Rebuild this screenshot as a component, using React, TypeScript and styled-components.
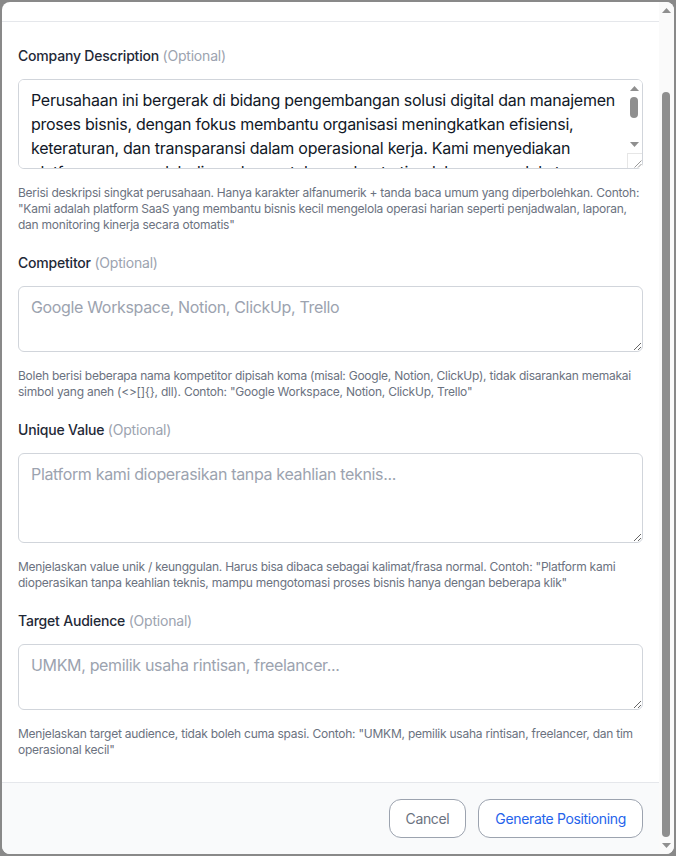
import React, { useLayoutEffect, useRef, useState } from 'react';
import styled, { createGlobalStyle } from 'styled-components';

const GlobalStyle = createGlobalStyle`
  html, body {
    margin: 0;
    height: 100%;
  }
  body {
    font-family: 'Inter', 'Noto Sans', sans-serif;
    background: #898989;
  }
  #root {
    height: 100%;
  }
  * {
    box-sizing: border-box;
  }
`;

const Overlay = styled.div`
  height: 100vh;
  padding: 2px;
  display: flex;
`;

const Modal = styled.div`
  flex: 1;
  display: flex;
  background: #ffffff;
  border-radius: 8px;
  overflow: hidden;
`;

const Scroller = styled.div`
  flex: 1;
  overflow-y: auto;
  scrollbar-width: none;
  &::-webkit-scrollbar {
    display: none;
  }
`;

const Header = styled.div`
  padding: 24px 16px 27px;
  border-bottom: 1px solid #e5e7eb;
`;

const Title = styled.h2`
  margin: 0;
  font-size: 18px;
  line-height: 28px;
  font-weight: 600;
  color: #111827;
`;

const Subtitle = styled.p`
  margin: 4px 0 0;
  font-size: 14px;
  line-height: 20px;
  color: #6b7280;
`;

const Body = styled.div`
  padding: 24px 16px;
`;

const Field = styled.div`
  & + & {
    margin-top: 20px;
  }
`;

const Label = styled.label`
  display: block;
  margin-bottom: 13px;
  font-size: 14px;
  line-height: 20px;
  font-weight: 500;
  letter-spacing: -0.2px;
  color: #1f2937;
`;

const Optional = styled.span`
  font-weight: 400;
  color: #9ca3af;
`;

const InputBox = styled.div`
  position: relative;
`;

const TextArea = styled.textarea<{ $lines: number }>`
  display: block;
  width: 100%;
  height: ${(p) => p.$lines * 24 + 18}px;
  margin: 0;
  padding: 8px ${(p) => (p.$lines > 2 ? 20 : 12)}px 8px 12px;
  border: 1px solid #d1d5db;
  border-radius: 6px;
  background: #ffffff;
  font-family: 'Inter', 'Noto Sans', sans-serif;
  font-size: 16px;
  line-height: 24px;
  letter-spacing: -0.26px;
  color: #111827;
  resize: vertical;
  outline: none;
  scrollbar-width: none;
  &::-webkit-scrollbar {
    display: none;
  }
  &::placeholder {
    color: #9ca3af;
    letter-spacing: -0.34px;
  }
`;

const Help = styled.p`
  margin: 16px 0 0;
  font-size: 12px;
  line-height: 16px;
  letter-spacing: -0.24px;
  color: #6b7280;
`;

const Footer = styled.div`
  display: flex;
  justify-content: flex-end;
  gap: 12px;
  padding: 16px;
  background: #f9fafb;
  border-top: 1px solid #e5e7eb;
`;

const Button = styled.button<{ $primary?: boolean }>`
  height: 39px;
  padding: 0 16px;
  border: 1px solid #9ca3af;
  border-radius: 12px;
  background: #ffffff;
  font-family: 'Inter', 'Noto Sans', sans-serif;
  font-size: 14px;
  letter-spacing: -0.35px;
  color: ${(p) => (p.$primary ? '#2563eb' : '#6b7280')};
  cursor: pointer;
`;

/* drawn scrollbars */

const Track = styled.div<{ $bg: string }>`
  width: 15px;
  display: flex;
  flex-direction: column;
  background: ${(p) => p.$bg};
`;

const FieldTrack = styled(Track)`
  position: absolute;
  top: 1px;
  right: 1px;
  bottom: 1px;
  border-top-right-radius: 5px;
  border-bottom-right-radius: 5px;
`;

const Arrow = styled.div`
  height: 17px;
  flex: none;
  display: flex;
  align-items: center;
  justify-content: center;
  color: #8f8f8f;
`;

const ThumbArea = styled.div`
  flex: 1;
  position: relative;
`;

const Thumb = styled.div`
  position: absolute;
  left: 3px;
  width: 8px;
  border-radius: 4px;
  background: #8f8f8f;
`;

const Corner = styled.div`
  height: 15px;
  flex: none;
  background: #ffffff;
  border-top: 1px solid #e6e6e6;
  border-left: 1px solid #e6e6e6;
  display: flex;
  align-items: flex-end;
  justify-content: flex-end;
`;

const Triangle = ({ down }: { down?: boolean }) => (
  <svg width="9" height="5" viewBox="0 0 9 5">
    <polygon points={down ? '0,0 9,0 4.5,5' : '0,5 4.5,0 9,5'} fill="currentColor" />
  </svg>
);

const Grip = () => (
  <svg width="9" height="9" viewBox="0 0 9 9">
    <line x1="8.5" y1="1.5" x2="1.5" y2="8.5" stroke="#9a9a9a" strokeWidth="1" />
    <line x1="8.5" y1="5" x2="5" y2="8.5" stroke="#9a9a9a" strokeWidth="1" />
  </svg>
);

type Bar = { top: number; height: number };

function measure(el: HTMLElement, reserved: number): Bar {
  const track = el.clientHeight - reserved;
  const ratio = el.clientHeight / el.scrollHeight;
  return {
    top: (el.scrollTop / el.scrollHeight) * track,
    height: Math.max(ratio * track, 18),
  };
}

const description =
  'Perusahaan ini bergerak di bidang pengembangan solusi digital dan manajemen proses bisnis, dengan fokus membantu organisasi meningkatkan efisiensi, keteraturan, dan transparansi dalam operasional kerja. Kami menyediakan platform yang mudah digunakan untuk membantu tim dalam mengelola tugas, memantau progres, serta mengambil keputusan berbasis data secara cepat dan akurat.';

const fields = [
  {
    label: 'Competitor',
    lines: 2,
    placeholder: 'Google Workspace, Notion, ClickUp, Trello',
    help: 'Boleh berisi beberapa nama kompetitor dipisah koma (misal: Google, Notion, ClickUp), tidak disarankan memakai simbol yang aneh (<>[]{}, dll). Contoh: "Google Workspace, Notion, ClickUp, Trello"',
  },
  {
    label: 'Unique Value',
    lines: 3,
    placeholder: 'Platform kami dioperasikan tanpa keahlian teknis...',
    help: 'Menjelaskan value unik / keunggulan. Harus bisa dibaca sebagai kalimat/frasa normal. Contoh: "Platform kami dioperasikan tanpa keahlian teknis, mampu mengotomasi proses bisnis hanya dengan beberapa klik"',
  },
  {
    label: 'Target Audience',
    lines: 2,
    placeholder: 'UMKM, pemilik usaha rintisan, freelancer...',
    help: 'Menjelaskan target audience, tidak boleh cuma spasi. Contoh: "UMKM, pemilik usaha rintisan, freelancer, dan tim operasional kecil"',
  },
];

export default function App() {
  const scrollRef = useRef<HTMLDivElement>(null);
  const descRef = useRef<HTMLTextAreaElement>(null);
  const [page, setPage] = useState<Bar>({ top: 0, height: 0 });
  const [desc, setDesc] = useState<Bar>({ top: 0, height: 0 });

  useLayoutEffect(() => {
    const el = scrollRef.current;
    if (el) {
      el.scrollTop = el.scrollHeight;
      setPage(measure(el, 34));
    }
    const ta = descRef.current;
    if (ta) setDesc(measure(ta, 49));
  }, []);

  return (
    <>
      <GlobalStyle />
      <Overlay>
        <Modal>
          <Scroller ref={scrollRef}>
            <Header>
              <Title>Generate Positioning</Title>
              <Subtitle>Lengkapi informasi perusahaan untuk menghasilkan positioning yang tepat.</Subtitle>
            </Header>

            <Body>
              <Field>
                <Label>
                  Company Description <Optional>(Optional)</Optional>
                </Label>
                <InputBox>
                  <TextArea ref={descRef} $lines={3} defaultValue={description} />
                  <FieldTrack $bg="#ffffff">
                    <Arrow>
                      <Triangle />
                    </Arrow>
                    <ThumbArea>
                      <Thumb style={{ top: desc.top, height: desc.height }} />
                    </ThumbArea>
                    <Arrow>
                      <Triangle down />
                    </Arrow>
                    <Corner>
                      <Grip />
                    </Corner>
                  </FieldTrack>
                </InputBox>
                <Help>
                  Berisi deskripsi singkat perusahaan. Hanya karakter alfanumerik + tanda baca umum yang diperbolehkan.
                  Contoh: "Kami adalah platform SaaS yang membantu bisnis kecil mengelola operasi harian seperti
                  penjadwalan, laporan, dan monitoring kinerja secara otomatis"
                </Help>
              </Field>

              {fields.map((f) => (
                <Field key={f.label}>
                  <Label>
                    {f.label} <Optional>(Optional)</Optional>
                  </Label>
                  <TextArea $lines={f.lines} placeholder={f.placeholder} />
                  <Help>{f.help}</Help>
                </Field>
              ))}
            </Body>

            <Footer>
              <Button>Cancel</Button>
              <Button $primary>Generate Positioning</Button>
            </Footer>
          </Scroller>

          <Track $bg="#fafafa">
            <Arrow>
              <Triangle />
            </Arrow>
            <ThumbArea>
              <Thumb style={{ top: page.top, height: page.height }} />
            </ThumbArea>
            <Arrow>
              <Triangle down />
            </Arrow>
          </Track>
        </Modal>
      </Overlay>
    </>
  );
}
